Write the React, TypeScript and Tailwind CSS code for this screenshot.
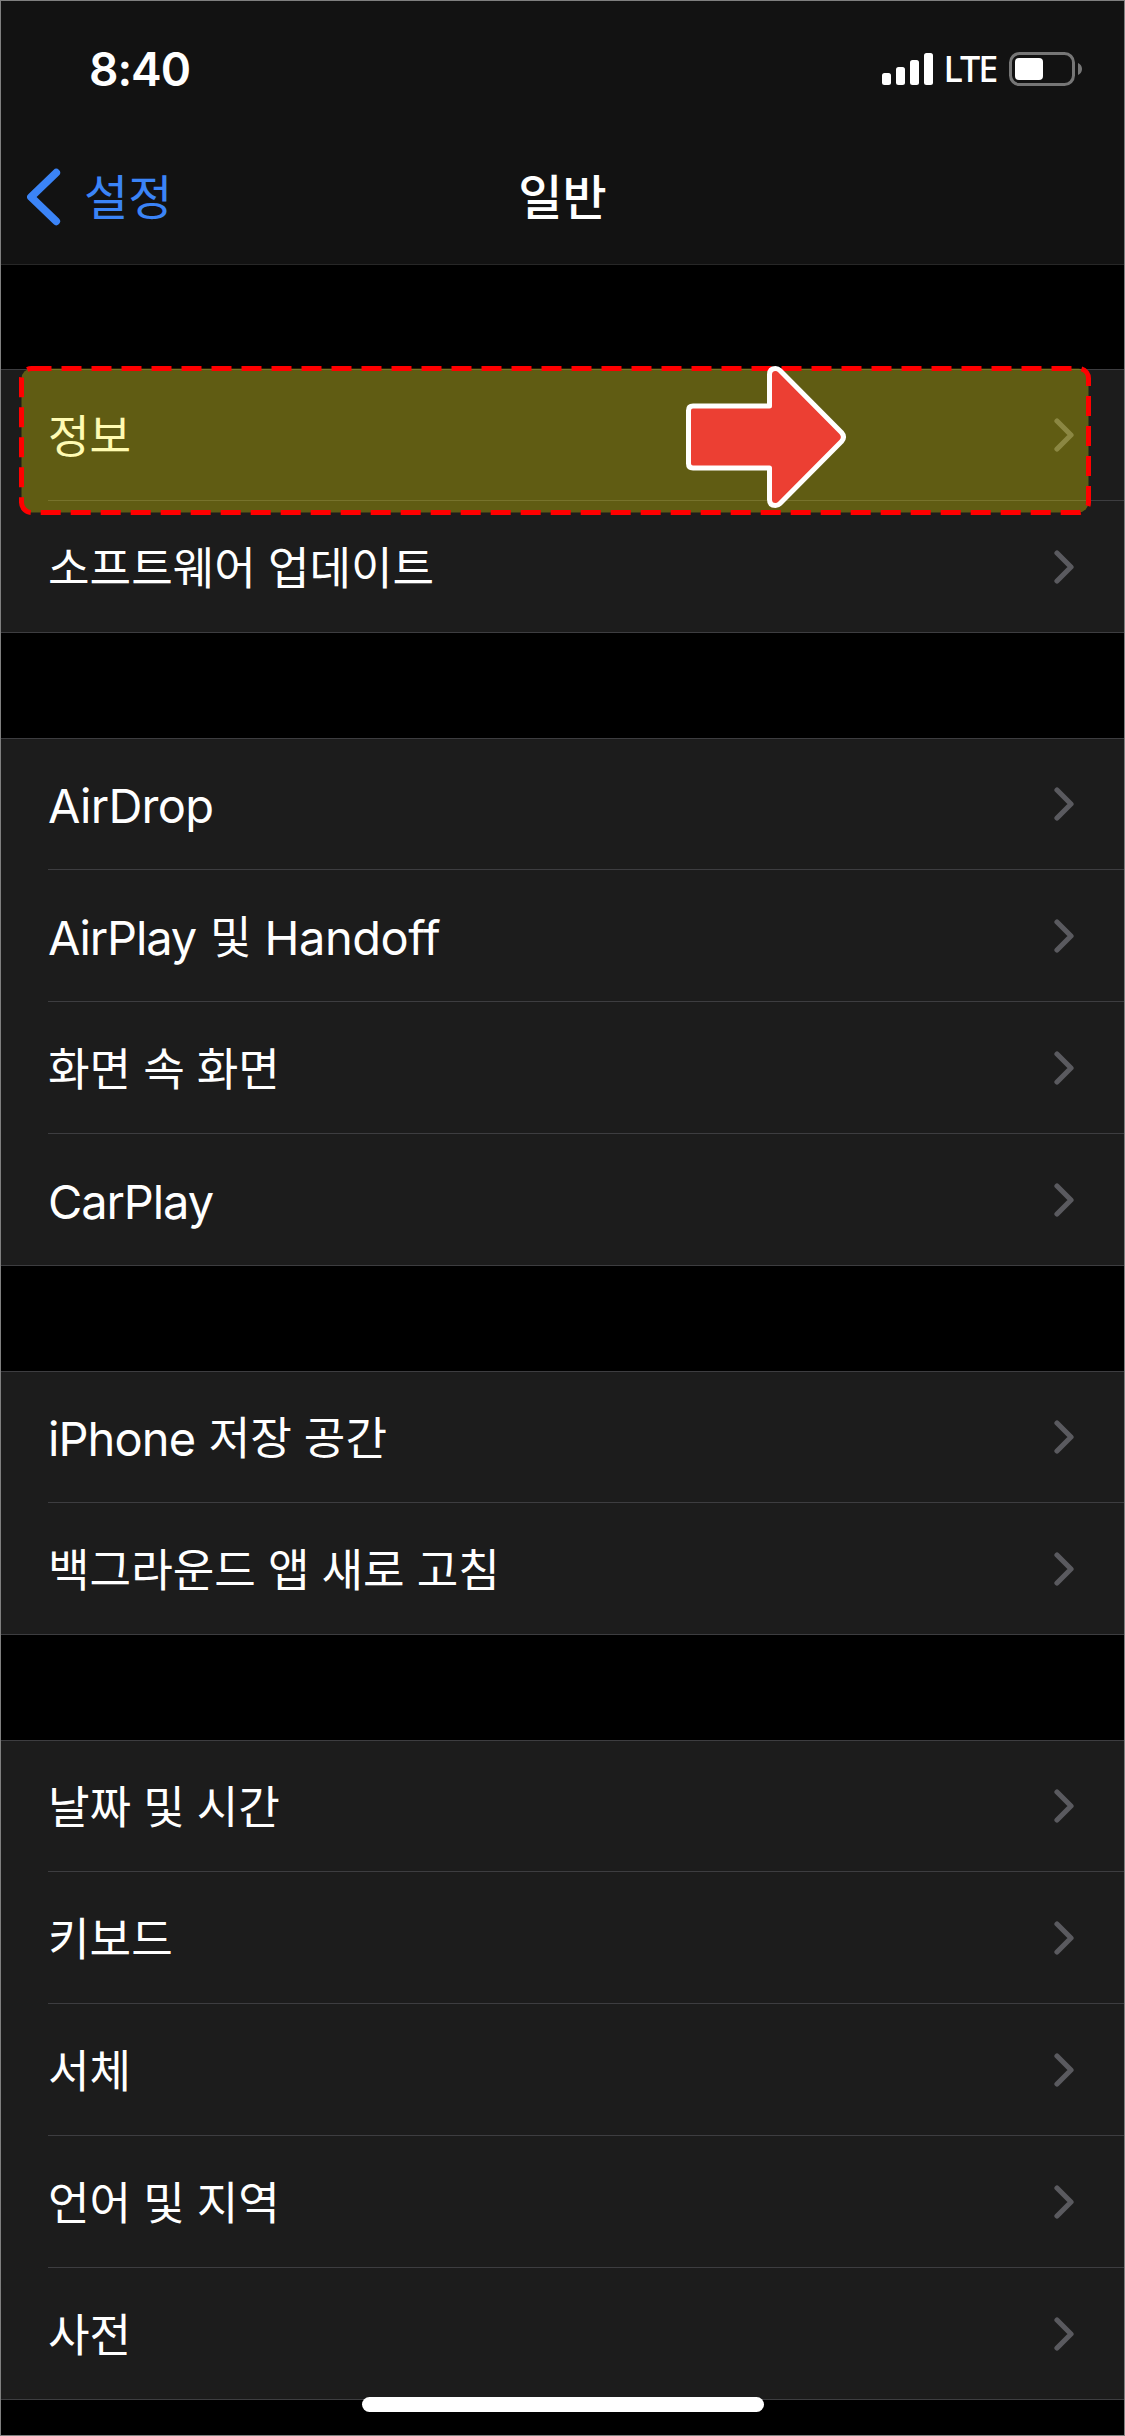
type Run = { text: string; latin?: string };
type Item = { id: string; runs: Run[]; highlighted?: boolean };

const ko = (text: string): Item => ({ id: text, runs: [{ text }] });

const groups: Item[][] = [
  [{ ...ko("정보"), highlighted: true }, ko("소프트웨어 업데이트")],
  [
    { id: "airdrop", runs: [{ text: "AirDrop", latin: "tracking-[-0.7px]" }] },
    {
      id: "airplay",
      runs: [
        { text: "AirPlay", latin: "tracking-[-1.15px] mr-[2px]" },
        { text: " 및 " },
        { text: "Handoff", latin: "tracking-[-0.5px] ml-[1px]" },
      ],
    },
    ko("화면 속 화면"),
    { id: "carplay", runs: [{ text: "CarPlay", latin: "tracking-[-1.1px]" }] },
  ],
  [
    { id: "storage", runs: [{ text: "iPhone", latin: "tracking-[-0.9px] mr-[1.5px]" }, { text: " 저장 공간" }] },
    ko("백그라운드 앱 새로 고침"),
  ],
  [ko("날짜 및 시간"), ko("키보드"), ko("서체"), ko("언어 및 지역"), ko("사전")],
];

function Chevron() {
  return (
    <svg width="20" height="34" viewBox="0 0 20 34" fill="none" className="shrink-0">
      <path d="M3 3L17 17L3 31" stroke="#5a5a5f" strokeWidth="5.2" strokeLinecap="round" strokeLinejoin="round" />
    </svg>
  );
}

function StatusBar() {
  return (
    <div className="flex h-[124px] items-center pt-3 pl-[88px] pr-[42px] text-white">
      <span className="font-['Inter',sans-serif] text-[46px] leading-[60px] font-semibold tracking-[-1px]">8:40</span>
      <div className="ml-auto flex items-center">
        <svg width="51" height="34" viewBox="0 0 51 34" fill="#fff">
          <rect x="0" y="21" width="9" height="12" rx="2.5" />
          <rect x="14" y="15" width="9" height="18" rx="2.5" />
          <rect x="28" y="8" width="9" height="25" rx="2.5" />
          <rect x="42" y="1" width="9" height="32" rx="2.5" />
        </svg>
        <span className="ml-[10.5px] w-[65.5px] font-['Noto_Sans',sans-serif] text-[36px] leading-[50px] font-medium tracking-[-2px]">
          LTE
        </span>
        <svg width="73" height="34" viewBox="0 0 73 34" fill="none">
          <rect x="1.5" y="1.5" width="63" height="31" rx="9" stroke="#767676" strokeWidth="3" />
          <rect x="6" y="6" width="28" height="22" rx="4" fill="#fff" />
          <path d="M69 11C71.4 12 73 14.3 73 17C73 19.7 71.4 22 69 23Z" fill="#767676" />
        </svg>
      </div>
    </div>
  );
}

function NavBar() {
  return (
    <div className="grid h-[139px] grid-cols-[1fr_auto_1fr] items-center pb-0.5 font-['Noto_Sans_CJK_KR',sans-serif] text-[48px] leading-[60px]">
      <div className="flex items-center gap-[23px] pl-[26px] text-[#3b84f7]">
        <svg width="34" height="58" viewBox="0 0 34 58" fill="none" className="mt-[7px]">
          <path d="M29.2 4.7L4 29L29.2 53.3" stroke="currentColor" strokeWidth="7.8" strokeLinecap="round" strokeLinejoin="round" />
        </svg>
        <span>설정</span>
      </div>
      <span className="font-medium text-white">일반</span>
      <span />
    </div>
  );
}

function Highlight() {
  return (
    <svg width="1074" height="150" viewBox="18 365 1074 150" fill="none" className="absolute top-[-5px] left-[17px] z-10">
      <rect x="21.5" y="368.5" width="1067" height="144" rx="10" fill="#fff200" fillOpacity="0.3" />
      <rect x="21.5" y="368.5" width="1067" height="144" rx="10" stroke="#ff0000" strokeWidth="5" strokeDasharray="20 10" />
      <path
        d="M693 406H769.5V374.5Q769.5 368.5 775.5 368.5Q778 368.5 780 370.5L841.5 432.5Q845.5 437 841.5 441.5L780 503.5Q778 505.5 775.5 505.5Q769.5 505.5 769.5 499.5V468H693Q688.5 468 688.5 463.5V410.5Q688.5 406 693 406Z"
        fill="#ec3f33"
        stroke="#fff"
        strokeWidth="5"
        strokeLinejoin="round"
      />
    </svg>
  );
}

function Row({ item, first, last }: { item: Item; first: boolean; last: boolean }) {
  const inset = last ? "" : "pl-[47px]";
  const height = first ? "h-[131px]" : "h-[132px]";
  const indent = last ? "pl-[47px]" : "";
  return (
    <li className={`relative ${inset}`}>
      <div className={`flex items-center justify-between border-b border-[#3d3d40] pr-[50px] ${height} ${indent}`}>
        <span className="text-[45.2px] leading-[60px] whitespace-pre text-white [word-spacing:1.9px]">
          {item.runs.map((run) => (
            <span
              key={run.text}
              className={
                run.latin
                  ? `font-['Inter',sans-serif] text-[47px] leading-[40px] ${run.latin}`
                  : "align-[1px] leading-[50px]"
              }
            >
              {run.text}
            </span>
          ))}
        </span>
        <Chevron />
      </div>
      {item.highlighted && <Highlight />}
    </li>
  );
}

export default function App() {
  return (
    <main className="relative flex h-[2436px] w-[1125px] flex-col overflow-hidden border border-[#7f7f7f] bg-black">
      <header className="border-b border-[#272727] bg-[#121212]">
        <StatusBar />
        <NavBar />
      </header>
      <div className="flex flex-col gap-[105px] pt-[104px] font-['Noto_Sans_CJK_KR',sans-serif]">
        {groups.map((items) => (
          <ul key={items[0].id} className="border-t border-[#3d3d40] bg-[#1c1c1c]">
            {items.map((item, i) => (
              <Row key={item.id} item={item} first={i === 0} last={i === items.length - 1} />
            ))}
          </ul>
        ))}
      </div>
      <div className="absolute bottom-[23px] left-[361px] h-[15px] w-[402px] rounded-full bg-white" />
    </main>
  );
}
